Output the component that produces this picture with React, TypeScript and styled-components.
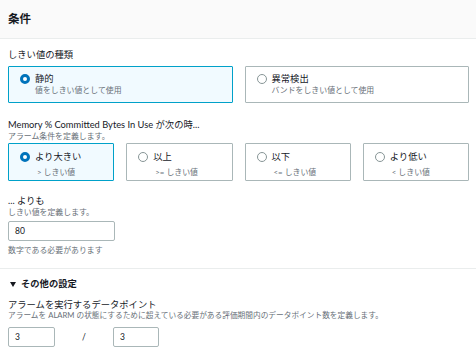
import React from "react";
import styled, { createGlobalStyle } from "styled-components";

const Global = createGlobalStyle`
  html, body { margin: 0; padding: 0; background: #ffffff; }
  body {
    font-family: "Lato", "Noto Sans CJK JP", sans-serif;
    color: #16191f;
    width: 476px;
    height: 351px;
    overflow: hidden;
  }
  * { box-sizing: border-box; }
`;

const Page = styled.div`
  display: flex;
  flex-direction: column;
`;

const Header = styled.div`
  height: 39px;
  background: #fafafa;
  border-bottom: 1px solid #eaeded;
  display: flex;
  align-items: center;
  padding: 0 8px;
`;

const Title = styled.h2`
  margin: 0;
  font-size: 11.5px;
  font-weight: 700;
  line-height: 14px;
`;

const Body = styled.div`
  display: flex;
  flex-direction: column;
  padding: 0 7px 0 8px;
`;

const Section = styled.div<{ $top: number }>`
  display: flex;
  flex-direction: column;
  margin-top: ${(p) => p.$top}px;
`;

const Label = styled.div<{ $lh?: number }>`
  font-size: 9.3px;
  line-height: ${(p) => p.$lh ?? 12}px;
  color: #16191f;
`;

const Desc = styled.div<{ $size?: number; $lh?: number }>`
  font-size: ${(p) => p.$size ?? 7.9}px;
  line-height: ${(p) => p.$lh ?? 11}px;
  color: #687078;
`;

const Cards = styled.div<{ $cols: number; $top: number }>`
  display: grid;
  grid-template-columns: repeat(${(p) => p.$cols}, 1fr);
  column-gap: 12px;
  margin-top: ${(p) => p.$top}px;
`;

const Card = styled.div<{ $on?: boolean; $h: number }>`
  height: ${(p) => p.$h}px;
  border: 1px solid ${(p) => (p.$on ? "#00a1c9" : "#aab7b8")};
  background: ${(p) => (p.$on ? "#f1faff" : "#ffffff")};
  border-radius: 1px;
  display: flex;
  align-items: flex-start;
  gap: 5px;
  padding: ${(p) => (p.$h > 37 ? "7px" : "6px")} 8px 0 11px;
`;

const Radio = styled.span<{ $on?: boolean }>`
  flex: none;
  width: 10px;
  height: 10px;
  margin-top: 1px;
  border-radius: 50%;
  background: #ffffff;
  border: ${(p) => (p.$on ? "3px solid #0073bb" : "1px solid #879596")};
`;

const CardText = styled.div<{ $gap: number }>`
  display: flex;
  flex-direction: column;
  gap: ${(p) => p.$gap}px;
`;

const CardTitle = styled.div`
  font-size: 9.3px;
  line-height: 12px;
  color: #16191f;
`;

const CardSub = styled.div<{ $indent?: number }>`
  font-size: 7.9px;
  line-height: 11px;
  color: #687078;
  padding-left: ${(p) => p.$indent ?? 0}px;
`;

const Input = styled.div<{ $w: number; $top?: number }>`
  width: ${(p) => p.$w}px;
  height: 20px;
  border: 1px solid #aab7b8;
  border-radius: 2px;
  background: #ffffff;
  display: flex;
  align-items: center;
  padding-left: 6px;
  font-size: 8.5px;
  color: #16191f;
  margin-top: ${(p) => p.$top ?? 0}px;
`;

const Hint = styled.div`
  font-size: 7.9px;
  line-height: 11px;
  color: #687078;
  margin-top: 4px;
`;

const Divider = styled.div`
  height: 1px;
  background: #eaeded;
  margin-top: 12px;
`;

const Expander = styled.div`
  display: flex;
  align-items: center;
  gap: 5px;
  padding: 0 8px 0 10px;
  margin-top: 9px;
  font-size: 9.3px;
  line-height: 12px;
  font-weight: 700;
  color: #16191f;
`;

const Caret = styled.svg`
  width: 6px;
  height: 5px;
  flex: none;
`;

const PairRow = styled.div`
  display: flex;
  align-items: center;
  margin-top: 7px;
`;

const Slash = styled.span`
  width: 58px;
  text-align: center;
  font-size: 8.5px;
  color: #16191f;
`;

type Opt = { title: string; sub: string; on?: boolean };

const typeOpts: Opt[] = [
  { title: "静的", sub: "値をしきい値として使用", on: true },
  { title: "異常検出", sub: "バンドをしきい値として使用" },
];

const condOpts: Opt[] = [
  { title: "より大きい", sub: "> しきい値", on: true },
  { title: "以上", sub: ">= しきい値" },
  { title: "以下", sub: "<= しきい値" },
  { title: "より低い", sub: "< しきい値" },
];

export default function App() {
  return (
    <Page>
      <Global />
      <Header>
        <Title>条件</Title>
      </Header>
      <Body>
        <Section $top={10}>
          <Label>しきい値の種類</Label>
          <Cards $cols={2} $top={5}>
            {typeOpts.map((o) => (
              <Card key={o.title} $on={o.on} $h={37}>
                <Radio $on={o.on} />
                <CardText $gap={0}>
                  <CardTitle>{o.title}</CardTitle>
                  <CardSub>{o.sub}</CardSub>
                </CardText>
              </Card>
            ))}
          </Cards>
        </Section>

        <Section $top={16}>
          <Label>Memory % Committed Bytes In Use が次の時...</Label>
          <Desc>アラーム条件を定義します。</Desc>
          <Cards $cols={4} $top={1}>
            {condOpts.map((o) => (
              <Card key={o.title} $on={o.on} $h={38}>
                <Radio $on={o.on} />
                <CardText $gap={4}>
                  <CardTitle>{o.title}</CardTitle>
                  <CardSub $indent={2}>{o.sub}</CardSub>
                </CardText>
              </Card>
            ))}
          </Cards>
        </Section>

        <Section $top={14}>
          <Label>... よりも</Label>
          <Desc>しきい値を定義します。</Desc>
          <Input $w={107} $top={3}>80</Input>
          <Hint>数字である必要があります</Hint>
        </Section>
      </Body>

      <Divider />

      <Expander>
        <Caret viewBox="0 0 6 5">
          <path d="M0 0 L6 0 L3 5 Z" fill="#16191f" />
        </Caret>
        その他の設定
      </Expander>

      <Body>
        <Section $top={10}>
          <Label $lh={10}>アラームを実行するデータポイント</Label>
          <Desc $size={7.7} $lh={10}>
            アラームを ALARM の状態にするために超えている必要がある評価期間内のデータポイント数を定義します。
          </Desc>
          <PairRow>
            <Input $w={47}>3</Input>
            <Slash>/</Slash>
            <Input $w={46}>3</Input>
          </PairRow>
        </Section>
      </Body>
    </Page>
  );
}
